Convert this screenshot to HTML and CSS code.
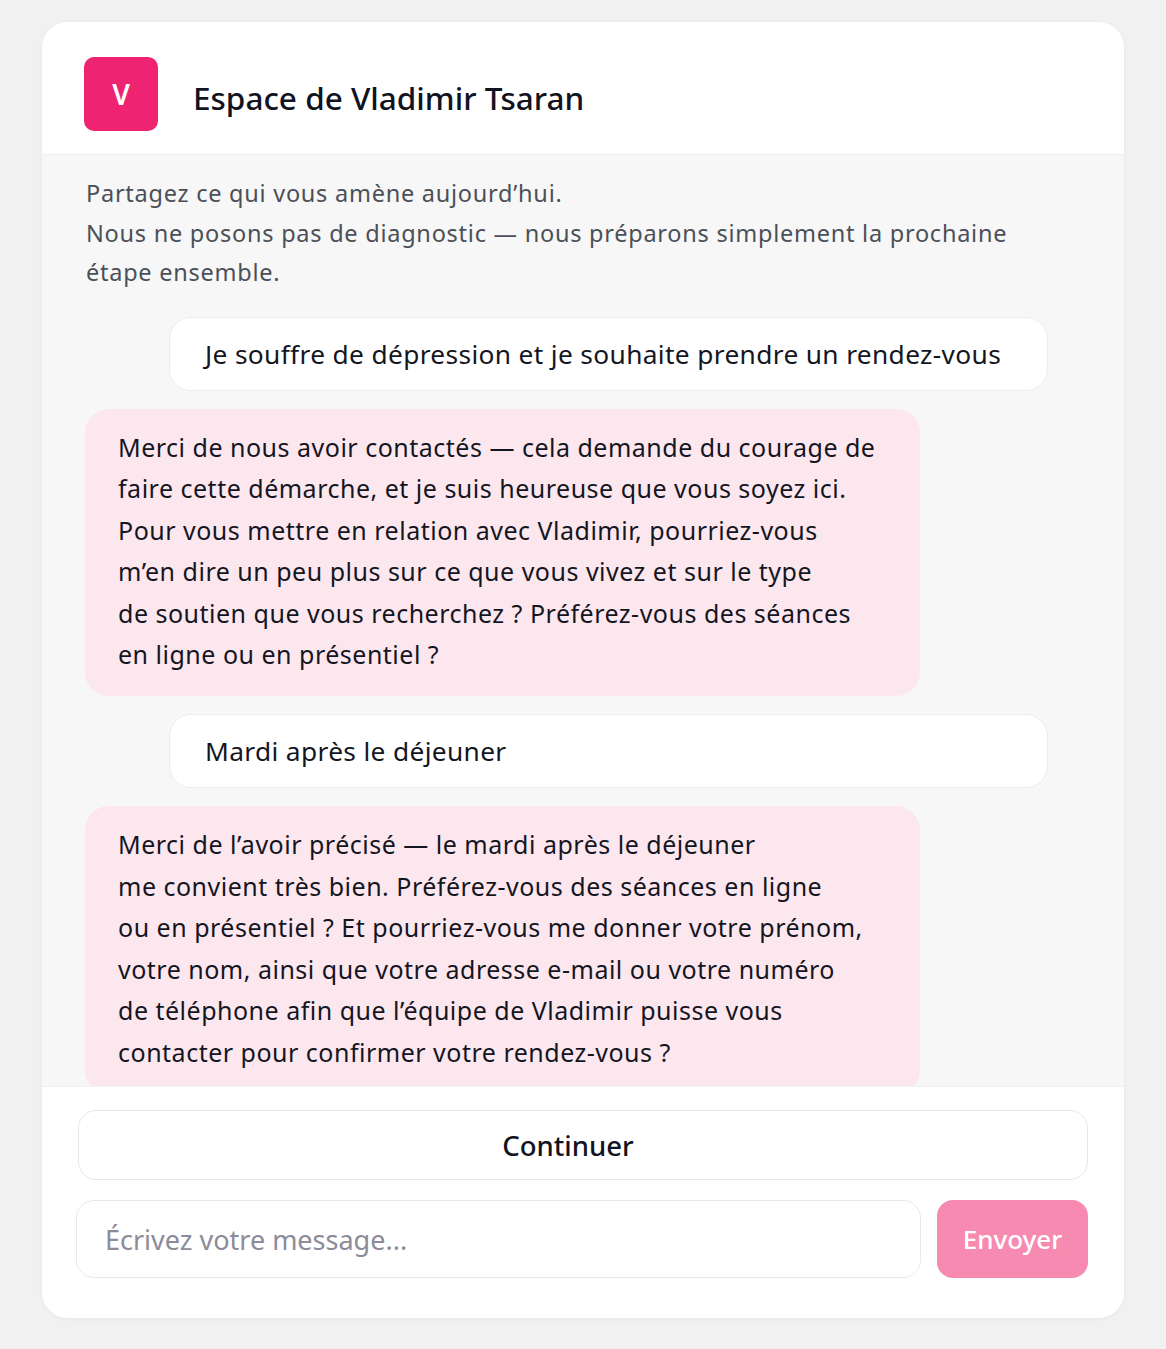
FILE: index.html
```html
<!DOCTYPE html>
<html lang="fr">
<head>
<meta charset="utf-8">
<title>Espace de Vladimir Tsaran</title>
<link rel="stylesheet" href="styles.css">
</head>
<body>
<main class="card">
  <header class="card-header">
    <div class="avatar">V</div>
    <h1 class="title">Espace de Vladimir Tsaran</h1>
  </header>

  <section class="thread">
    <p class="intro">Partagez ce qui vous amène aujourd’hui.<br>Nous ne posons pas de diagnostic — nous préparons simplement la prochaine<br>étape ensemble.</p>

    <div class="msg msg-user">Je souffre de dépression et je souhaite prendre un rendez-vous</div>

    <div class="msg msg-bot">Merci de nous avoir contactés — cela demande du courage de<br>faire cette démarche, et je suis heureuse que vous soyez ici.<br>Pour vous mettre en relation avec Vladimir, pourriez-vous<br>m’en dire un peu plus sur ce que vous vivez et sur le type<br>de soutien que vous recherchez ? Préférez-vous des séances<br>en ligne ou en présentiel ?</div>

    <div class="msg msg-user">Mardi après le déjeuner</div>

    <div class="msg msg-bot">Merci de l’avoir précisé — le mardi après le déjeuner<br>me convient très bien. Préférez-vous des séances en ligne<br>ou en présentiel ? Et pourriez-vous me donner votre prénom,<br>votre nom, ainsi que votre adresse e-mail ou votre numéro<br>de téléphone afin que l’équipe de Vladimir puisse vous<br>contacter pour confirmer votre rendez-vous ?</div>
  </section>

  <footer class="composer">
    <button class="btn-continue" type="button">Continuer</button>
    <form class="send-row">
      <input class="field" type="text" placeholder="Écrivez votre message...">
      <button class="btn-send" type="button">Envoyer</button>
    </form>
  </footer>
</main>
</body>
</html>
```

FILE: styles.css
```css
* {
  box-sizing: border-box;
}

html, body {
  margin: 0;
  padding: 0;
}

body {
  background: #f0f1f0;
  font-family: "Noto Sans", "Open Sans", sans-serif;
  color: #14161f;
  padding: 22px 42px 31px 42px;
}

.card {
  width: 1082px;
  height: 1296px;
  background: #ffffff;
  border-radius: 26px;
  box-shadow: 0 1px 4px rgba(0, 0, 0, 0.05);
  display: flex;
  flex-direction: column;
  overflow: hidden;
}

/* header */
.card-header {
  height: 133px;
  flex: none;
  display: flex;
  align-items: center;
  padding: 12px 42px 0 42px;
  gap: 35px;
  border-bottom: 1px solid #eef0ef;
  background: #ffffff;
}

.avatar {
  width: 74px;
  height: 74px;
  border-radius: 10px;
  background: #ee2472;
  color: #ffffff;
  font-size: 28px;
  font-weight: 600;
  display: flex;
  align-items: center;
  justify-content: center;
}

.title {
  margin: 0 0 -6px 0;
  font-size: 31.5px;
  font-weight: 500;
  color: #111320;
}

/* conversation */
.thread {
  flex: none;
  height: 931px;
  overflow: hidden;
  background: #f6f7f6;
  padding: 19px 44px 0 43px;
  display: flex;
  flex-direction: column;
  gap: 18px;
}

.intro {
  margin: 0 0 6px 1px;
  font-size: 23.5px;
  letter-spacing: 0.75px;
  line-height: 39.5px;
  color: #4b5058;
}

.msg {
  flex: none;
}

.msg-user {
  margin-left: 84px;
  margin-right: 32px;
  background: #ffffff;
  border: 1px solid #eceeed;
  border-radius: 22px;
  padding: 16px 35px;
  font-size: 26.3px;
  letter-spacing: 0.35px;
  line-height: 40px;
}

.msg-bot {
  width: 835px;
  background: #fde7ef;
  border-radius: 24px;
  padding: 18px 33px 20px 33px;
  font-size: 25px;
  letter-spacing: 0.5px;
  line-height: 41.6px;
}

/* composer */
.composer {
  flex: 1;
  background: #ffffff;
  border-top: 1px solid #f0f1f0;
  padding: 23px 36px 0 34px;
  display: flex;
  flex-direction: column;
  gap: 20px;
}

.btn-continue {
  margin-left: 2px;
  height: 70px;
  padding: 0 30px 0 0;
  border: 1px solid #e6e8e7;
  border-radius: 18px;
  background: #ffffff;
  font-family: inherit;
  font-size: 27.5px;
  font-weight: 500;
  color: #111320;
}

.send-row {
  margin: 0;
  display: flex;
  gap: 16px;
  height: 78px;
}

.field {
  flex: 1;
  border: 1px solid #e8eae9;
  border-radius: 18px;
  background: #ffffff;
  padding: 0 28px;
  font-family: inherit;
  font-size: 27px;
  color: #14161f;
}

.field::placeholder {
  color: #8b8b99;
}

.btn-send {
  width: 151px;
  border: none;
  border-radius: 16px;
  background: #f78ab0;
  color: #ffffff;
  font-family: inherit;
  font-size: 26px;
  font-weight: 500;
}
```
